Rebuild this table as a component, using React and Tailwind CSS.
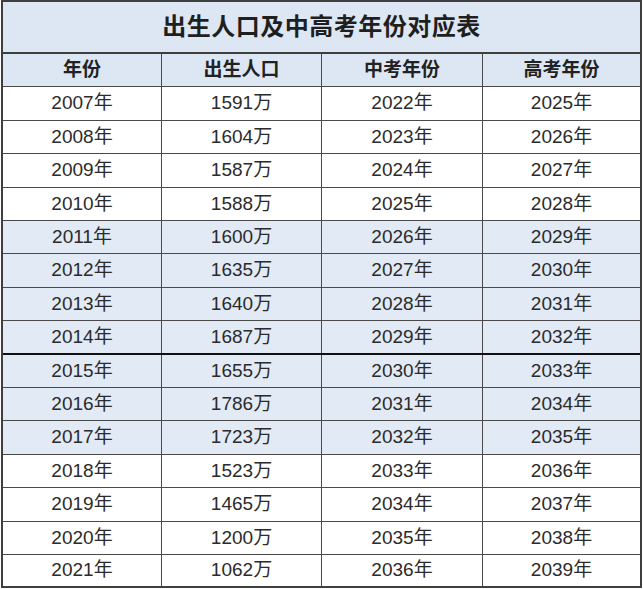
// App.jsx
// 出生人口及中高考年份对应表 — static table

const rows = [
  { year: '2007年', births: '1591万', zk: '2022年', gk: '2025年', h: 'h-[34px]', blue: false },
  { year: '2008年', births: '1604万', zk: '2023年', gk: '2026年', h: 'h-[33px]', blue: false },
  { year: '2009年', births: '1587万', zk: '2024年', gk: '2027年', h: 'h-[34px]', blue: false },
  { year: '2010年', births: '1588万', zk: '2025年', gk: '2028年', h: 'h-[33px]', blue: false },
  { year: '2011年', births: '1600万', zk: '2026年', gk: '2029年', h: 'h-[33px]', blue: true },
  { year: '2012年', births: '1635万', zk: '2027年', gk: '2030年', h: 'h-[34px]', blue: true },
  { year: '2013年', births: '1640万', zk: '2028年', gk: '2031年', h: 'h-[33px]', blue: true },
  { year: '2014年', births: '1687万', zk: '2029年', gk: '2032年', h: 'h-[34px]', blue: true, thick: true },
  { year: '2015年', births: '1655万', zk: '2030年', gk: '2033年', h: 'h-[33px]', blue: true },
  { year: '2016年', births: '1786万', zk: '2031年', gk: '2034年', h: 'h-[33px]', blue: true },
  { year: '2017年', births: '1723万', zk: '2032年', gk: '2035年', h: 'h-[34px]', blue: true },
  { year: '2018年', births: '1523万', zk: '2033年', gk: '2036年', h: 'h-[33px]', blue: false },
  { year: '2019年', births: '1465万', zk: '2034年', gk: '2037年', h: 'h-[34px]', blue: false },
  { year: '2020年', births: '1200万', zk: '2035年', gk: '2038年', h: 'h-[33px]', blue: false },
  { year: '2021年', births: '1062万', zk: '2036年', gk: '2039年', h: 'h-[31px]', blue: false, last: true },
]

// cell widths include the 1px left divider (border-box)
const widths = ['w-[158px]', 'w-[160px] border-l border-[#4a4a4a]', 'w-[161px] border-l border-[#4a4a4a]', 'w-[158px] border-l border-[#4a4a4a]']

function Row({ cells, className, cellClass }) {
  return (
    <div className={`flex ${className}`}>
      {cells.map((c, i) => (
        <div key={i} className={`${widths[i]} flex items-center justify-center ${cellClass}`}>
          {c}
        </div>
      ))}
    </div>
  )
}

export default function App() {
  return (
    <div
      className="w-[643px] h-[589px] bg-white"
      style={{ fontFamily: '"Liberation Sans", "Noto Sans CJK SC", sans-serif' }}
    >
      <div className="ml-[1px] w-[641px] border-2 border-[#3f3f3f]">
        {/* Title */}
        <div className="h-[52px] flex items-center justify-center bg-[#dde7f3] border-b-2 border-[#3f3f3f] text-[24px] font-bold text-[#1f1f1f] tracking-[0.5px]">
          出生人口及中高考年份对应表
        </div>

        {/* Header */}
        <Row
          cells={['年份', '出生人口', '中考年份', '高考年份']}
          className="h-[33px] bg-[#dde7f3] border-b border-[#4a4a4a]"
          cellClass="text-[19px] font-bold text-[#222]"
        />

        {/* Data rows */}
        {rows.map((r) => (
          <Row
            key={r.year}
            cells={[r.year, r.births, r.zk, r.gk]}
            className={`${r.h} ${r.blue ? 'bg-[#e1eaf5]' : 'bg-white'} ${
              r.last ? '' : r.thick ? 'border-b-2 border-[#111]' : 'border-b border-[#4a4a4a]'
            }`}
            cellClass="text-[19px] text-[#2b2b2b]"
          />
        ))}
      </div>
    </div>
  )
}
